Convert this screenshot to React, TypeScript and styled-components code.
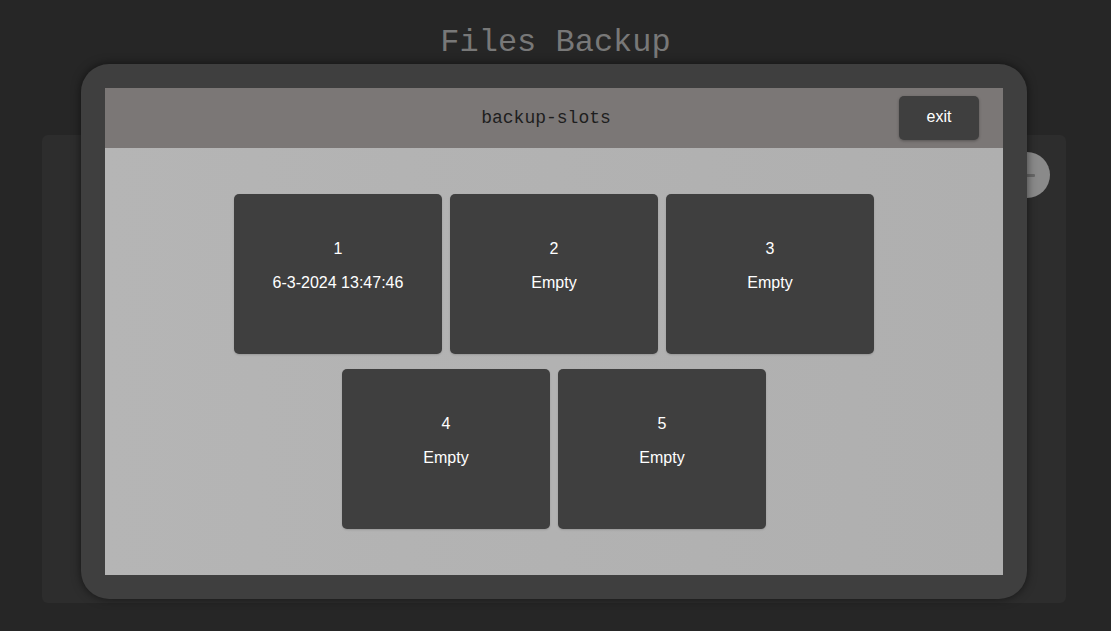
import React from "react";
import styled, { createGlobalStyle } from "styled-components";

const Global = createGlobalStyle`
  html, body { margin: 0; padding: 0; background: #262626; }
  body { font-family: "Liberation Sans", Arial, sans-serif; }
  * { box-sizing: border-box; }
`;

const Page = styled.div`
  position: relative;
  width: 1111px;
  height: 631px;
  overflow: hidden;
  background: #262626;
`;

const Title = styled.h1`
  margin: 0;
  padding-top: 23px;
  height: 135px;
  text-align: center;
  font-family: "Liberation Mono", "Courier New", monospace;
  font-weight: normal;
  font-size: 32px;
  line-height: 40px;
  color: #787878;
`;

const Panel = styled.section`
  margin-left: 42px;
  width: 1024px;
  height: 468px;
  background: #2d2d2d;
  border-radius: 6px;
  display: flex;
  justify-content: flex-end;
  align-items: flex-start;
  padding: 17px 16px;
`;

const RoundButton = styled.button`
  width: 46px;
  height: 46px;
  border-radius: 50%;
  border: none;
  background: #8a8a8a;
  padding: 0;
  display: flex;
  align-items: center;
  justify-content: center;
  &::after {
    content: "";
    width: 16px;
    height: 3px;
    background: #686868;
    border-radius: 1px;
  }
`;

const Modal = styled.div`
  position: absolute;
  left: 81px;
  top: 64px;
  width: 946px;
  height: 535px;
  background: #3f3f3f;
  border-radius: 28px;
  padding: 24px;
  box-shadow: 0 0 10px rgba(0, 0, 0, 0.55);
  display: flex;
  flex-direction: column;
`;

const Header = styled.header`
  height: 60px;
  background: #7b7776;
  display: flex;
  align-items: center;
  padding-right: 24px;
`;

const HeaderTitle = styled.div`
  flex: 1;
  padding-left: 88px;
  text-align: center;
  font-family: "Liberation Mono", "Courier New", monospace;
  font-size: 18px;
  color: #1e1e1e;
`;

const ExitButton = styled.button`
  width: 80px;
  height: 44px;
  border: none;
  border-radius: 5px;
  background: #3f3f3f;
  color: #ffffff;
  font-family: "Liberation Sans", Arial, sans-serif;
  font-size: 16px;
  box-shadow: 0 1px 3px rgba(0, 0, 0, 0.3);
  padding: 0 0 3px;
`;

const Body = styled.div`
  flex: 1;
  background: linear-gradient(90deg, #b5b5b5, #afafaf);
  display: flex;
  align-items: center;
  justify-content: center;
`;

const Grid = styled.div`
  width: 640px;
  display: flex;
  flex-wrap: wrap;
  justify-content: center;
  gap: 15px 8px;
`;

const Card = styled.div`
  width: 208px;
  height: 160px;
  background: #3f3f3f;
  border-radius: 5px;
  display: flex;
  flex-direction: column;
  align-items: center;
  padding-top: 46px;
  gap: 16px;
  color: #ffffff;
  font-size: 16px;
  line-height: 18px;
  box-shadow: 0 1px 2px rgba(0, 0, 0, 0.15);
`;

const slots = [
  { n: 1, label: "6-3-2024 13:47:46" },
  { n: 2, label: "Empty" },
  { n: 3, label: "Empty" },
  { n: 4, label: "Empty" },
  { n: 5, label: "Empty" },
];

export default function App() {
  return (
    <Page>
      <Global />
      <Title>Files Backup</Title>
      <Panel>
        <RoundButton aria-label="remove" />
      </Panel>
      <Modal>
        <Header>
          <HeaderTitle>backup-slots</HeaderTitle>
          <ExitButton>exit</ExitButton>
        </Header>
        <Body>
          <Grid>
            {slots.map((s) => (
              <Card key={s.n}>
                <span>{s.n}</span>
                <span>{s.label}</span>
              </Card>
            ))}
          </Grid>
        </Body>
      </Modal>
    </Page>
  );
}
